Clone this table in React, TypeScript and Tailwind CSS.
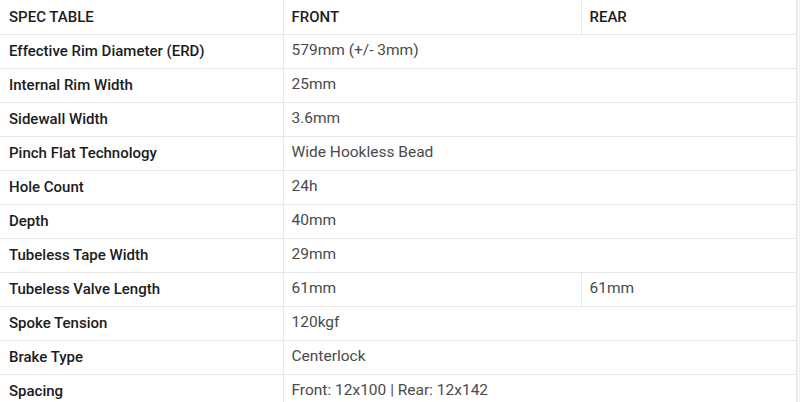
import React from 'react';

type Row = { label: string; front: string; rear?: string };

const rows: Row[] = [
  { label: 'Effective Rim Diameter (ERD)', front: '579mm (+/- 3mm)' },
  { label: 'Internal Rim Width', front: '25mm' },
  { label: 'Sidewall Width', front: '3.6mm' },
  { label: 'Pinch Flat Technology', front: 'Wide Hookless Bead' },
  { label: 'Hole Count', front: '24h' },
  { label: 'Depth', front: '40mm' },
  { label: 'Tubeless Tape Width', front: '29mm' },
  { label: 'Tubeless Valve Length', front: '61mm', rear: '61mm' },
  { label: 'Spoke Tension', front: '120kgf' },
  { label: 'Brake Type', front: 'Centerlock' },
  { label: 'Spacing', front: 'Front: 12x100 | Rear: 12x142' },
];

const SpecTable: React.FC = () => {
  return (
    <div className="w-[800px] h-[402px] overflow-hidden bg-[#f4f4f4] font-['Roboto',sans-serif]">
      <table className="w-[797px] table-fixed border-collapse bg-white">
        <colgroup>
          <col className="w-[283px]" />
          <col className="w-[298px]" />
          <col />
        </colgroup>
        {/* Header */}
        <thead>
          <tr className="h-[34px]">
            <th className="border-b border-r border-[#e6e6e6] px-[9px] text-left text-[15px] font-medium text-[#1c1c1c]">SPEC TABLE</th>
            <th className="border-b border-r border-[#e6e6e6] px-[8px] text-left text-[15px] font-medium text-[#1c1c1c]">FRONT</th>
            <th className="border-b border-r border-[#e6e6e6] px-[8px] text-left text-[15px] font-medium text-[#1c1c1c]">REAR</th>
          </tr>
        </thead>
        <tbody>
          {rows.map((row) => (
            <tr key={row.label} className="h-[34px]">
              <td className="border-b border-r border-[#e6e6e6] px-[9px] text-[15px] font-medium text-[#1c1c1c]">{row.label}</td>
              {row.rear ? (
                <>
                  <td className="border-b border-r border-[#e6e6e6] px-[8px] text-[15.5px] text-[#4a4a4a]">{row.front}</td>
                  <td className="border-b border-r border-[#e6e6e6] px-[8px] text-[15.5px] text-[#4a4a4a]">{row.rear}</td>
                </>
              ) : (
                <td colSpan={2} className="border-b border-r border-[#e6e6e6] px-[8px] text-[15.5px] text-[#4a4a4a]">{row.front}</td>
              )}
            </tr>
          ))}
        </tbody>
      </table>
    </div>
  );
};

export default SpecTable;
